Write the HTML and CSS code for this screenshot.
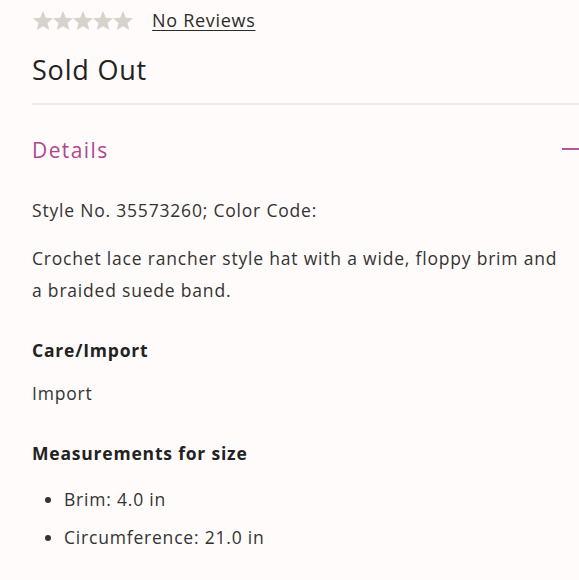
FILE: index.html
```html
<!DOCTYPE html>
<html>
<head>
<meta charset="utf-8">
<link rel="stylesheet" href="styles.css">
</head>
<body>
<div class="page">
  <div class="rating">
    <div class="stars">
      <svg class="star" viewBox="2 2 20 19"><path d="M12 17.27L18.18 21l-1.64-7.03L22 9.24l-7.19-.61L12 2 9.19 8.63 2 9.24l5.46 4.73L5.82 21z"/></svg>
      <svg class="star" viewBox="2 2 20 19"><path d="M12 17.27L18.18 21l-1.64-7.03L22 9.24l-7.19-.61L12 2 9.19 8.63 2 9.24l5.46 4.73L5.82 21z"/></svg>
      <svg class="star" viewBox="2 2 20 19"><path d="M12 17.27L18.18 21l-1.64-7.03L22 9.24l-7.19-.61L12 2 9.19 8.63 2 9.24l5.46 4.73L5.82 21z"/></svg>
      <svg class="star" viewBox="2 2 20 19"><path d="M12 17.27L18.18 21l-1.64-7.03L22 9.24l-7.19-.61L12 2 9.19 8.63 2 9.24l5.46 4.73L5.82 21z"/></svg>
      <svg class="star" viewBox="2 2 20 19"><path d="M12 17.27L18.18 21l-1.64-7.03L22 9.24l-7.19-.61L12 2 9.19 8.63 2 9.24l5.46 4.73L5.82 21z"/></svg>
    </div>
    <a class="reviews" href="#">No Reviews</a>
  </div>
  <div class="status">Sold Out</div>
  <div class="accordion">
    <div class="acc-head">
      <span class="acc-title">Details</span>
      <span class="acc-minus"></span>
    </div>
    <div class="acc-body">
      <p class="line">Style No. 35573260; Color Code:</p>
      <p class="desc">Crochet lace rancher style hat with a wide, floppy brim and a braided suede band.</p>
      <h4 class="subhead">Care/Import</h4>
      <p class="line">Import</p>
      <h4 class="subhead">Measurements for size</h4>
      <ul class="list">
        <li>Brim: 4.0 in</li>
        <li>Circumference: 21.0 in</li>
      </ul>
    </div>
  </div>
</div>
</body>
</html>
```
FILE: styles.css
```css
html, body {
  margin: 0;
  padding: 0;
  background: #fffbfa;
}
body {
  font-family: "Open Sans", "Liberation Sans", sans-serif;
  color: #2b2b2b;
  overflow: hidden;
}
.page {
  padding-left: 32px;
  width: 547px;
}
.rating {
  display: flex;
  align-items: center;
  height: 40px;
  gap: 19px;
}
.stars {
  display: flex;
  gap: 0;
  padding-left: 1px;
}
.star {
  width: 20px;
  height: 19px;
  fill: #d6d3cd;
}
.reviews {
  font-size: 18px;
  color: #2b2b2b;
  letter-spacing: 0.7px;
  text-decoration: underline;
  text-underline-offset: 3px;
}
.status {
  font-size: 27px;
  letter-spacing: 0.8px;
  line-height: 32px;
  margin-top: 14px;
  color: #222;
}
.accordion {
  margin-top: 17px;
  border-top: 2px solid #efebe8;
}
.acc-head {
  display: flex;
  align-items: center;
  justify-content: space-between;
  height: 89px;
}
.acc-title {
  font-size: 21px;
  letter-spacing: 1.4px;
  color: #b0478a;
}
.acc-minus {
  width: 17px;
  height: 2px;
  background: #b5589a;
  margin-top: -1px;
}
.acc-body {
  padding-right: 10px;
}
.acc-body p, .acc-body h4 {
  margin: 0;
}
.line {
  font-size: 17.5px;
  letter-spacing: 0.8px;
  line-height: 32px;
  color: #333;
}
.desc {
  font-size: 17.5px;
  letter-spacing: 0.8px;
  line-height: 32px;
  margin-top: 16px !important;
  color: #333;
}
.subhead {
  font-size: 17.5px;
  font-weight: 700;
  letter-spacing: 0.8px;
  line-height: 32px;
  margin-top: 28px !important;
  margin-bottom: 11px !important;
  color: #222;
}
.list {
  margin: 14px 0 0 0;
  padding-left: 32px;
  font-size: 17.5px;
  letter-spacing: 0.8px;
  line-height: 32px;
  color: #333;
}
.list li {
  margin-bottom: 6px;
}
```
